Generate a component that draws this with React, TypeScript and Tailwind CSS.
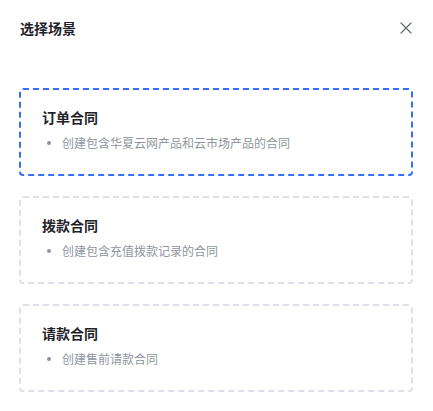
const scenes = [
  { title: "订单合同", desc: "创建包含华夏云网产品和云市场产品的合同", active: true },
  { title: "拨款合同", desc: "创建包含充值拨款记录的合同", active: false },
  { title: "请款合同", desc: "创建售前请款合同", active: false },
];

function SceneCard({ title, desc, active }: { title: string; desc: string; active: boolean }) {
  return (
    <div
      className={`rounded-[4px] border-2 border-dashed pl-[21px] pr-5 pt-[17px] pb-[21px] ${
        active ? "border-[#3370ff]" : "border-[#dedfea]"
      }`}
    >
      <div className="text-[14px] font-semibold leading-5 text-[#1f2329]">{title}</div>
      <div className="mt-[6px] flex items-center text-[12px] leading-5 text-[#8f959e]">
        <span className="ml-[5px] mr-[11px] h-[4px] w-[4px] rounded-full bg-[#8f959e]" />
        {desc}
      </div>
    </div>
  );
}

export default function App() {
  return (
    <div
      className="h-[411px] w-[433px] bg-white"
      style={{ fontFamily: '"Noto Sans CJK SC", "Noto Sans", sans-serif' }}
    >
      <div className="flex items-center justify-between pl-5 pr-[21px] pt-[18px]">
        <h2 className="text-[14px] font-semibold leading-5 text-[#1f2329]">选择场景</h2>
        <button className="text-[#646a73]">
          <svg width="12" height="12" viewBox="0 0 12 12" fill="none" stroke="currentColor" strokeWidth="1.2" strokeLinecap="round">
            <path d="M1 1l10 10M11 1L1 11" />
          </svg>
        </button>
      </div>

      <div className="mt-[50px] flex flex-col gap-5 pl-[19px] pr-5">
        {scenes.map((s) => (
          <SceneCard key={s.title} {...s} />
        ))}
      </div>
    </div>
  );
}
